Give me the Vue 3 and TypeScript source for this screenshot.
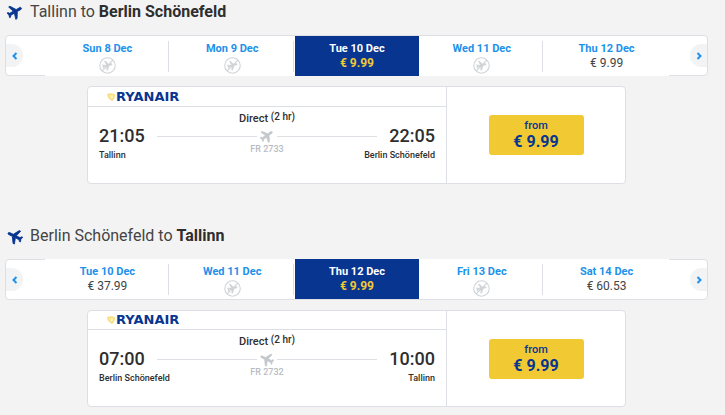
<script setup lang="ts">
interface Day { label: string; price?: string; selected?: boolean }
interface Trip {
  from: string
  to: string
  returning: boolean
  days: Day[]
  depart: string
  arrive: string
  flight: string
  price: string
}

const trips: Trip[] = [
  {
    from: 'Tallinn', to: 'Berlin Schönefeld', returning: false,
    days: [
      { label: 'Sun 8 Dec' },
      { label: 'Mon 9 Dec' },
      { label: 'Tue 10 Dec', price: '€ 9.99', selected: true },
      { label: 'Wed 11 Dec' },
      { label: 'Thu 12 Dec', price: '€ 9.99' },
    ],
    depart: '21:05', arrive: '22:05', flight: 'FR 2733', price: '€ 9.99',
  },
  {
    from: 'Berlin Schönefeld', to: 'Tallinn', returning: true,
    days: [
      { label: 'Tue 10 Dec', price: '€ 37.99' },
      { label: 'Wed 11 Dec' },
      { label: 'Thu 12 Dec', price: '€ 9.99', selected: true },
      { label: 'Fri 13 Dec' },
      { label: 'Sat 14 Dec', price: '€ 60.53' },
    ],
    depart: '07:00', arrive: '10:00', flight: 'FR 2732', price: '€ 9.99',
  },
]

const plane = 'M21 16v-2l-8-5V3.500c0-.83-.67-1.500-1.500-1.500S10 2.670 10 3.500V9l-8 5v2l8-2.500V19l-2 1.500V22l3.500-1 3.500 1v-1.500L13 19v-5.500l8 2.500z'
</script>

<template>
  <main class="page">
    <section v-for="trip in trips" :key="trip.flight" class="trip" :class="{ returning: trip.returning }">
      <h2 class="title">
        <svg class="title-icon" viewBox="0 0 24 24" aria-hidden="true">
          <path :d="plane" :transform="trip.returning ? 'rotate(-64 12 12)' : 'rotate(60 12 12)'" />
        </svg>
        <span>{{ trip.from }} to <b>{{ trip.to }}</b></span>
      </h2>

      <div class="carousel">
        <button class="arrow prev" type="button" aria-label="Previous days">
          <svg viewBox="0 0 8 8" aria-hidden="true"><path d="M5.500 1 2.500 4l3 3" /></svg>
        </button>
        <div class="days">
          <button v-for="day in trip.days" :key="day.label" type="button" class="day" :class="{ selected: day.selected }">
            <span class="date">{{ day.label }}</span>
            <span v-if="day.price" class="fare">{{ day.price }}</span>
            <svg v-else class="no-flight" viewBox="0 0 16 16" aria-hidden="true">
              <circle cx="8" cy="8" r="7.300" />
              <path class="glyph" :d="plane" transform="translate(8 8) rotate(75) scale(.46) translate(-12 -12)" />
              <path class="slash" d="M3 13 13 3" />
            </svg>
          </button>
        </div>
        <button class="arrow next" type="button" aria-label="Next days">
          <svg viewBox="0 0 8 8" aria-hidden="true"><path d="m2.500 1 3 3-3 3" /></svg>
        </button>
      </div>

      <article class="card">
        <div class="details">
          <header class="brand">
            <svg class="harp" viewBox="0 0 8 8" aria-hidden="true">
              <path class="harp-body" d="M0 1.500Q4-.8 8 1.500 8 5.500 5 8 1 6 0 1.500Z" />
              <path class="harp-strings" d="m2 2 2.500 4M4 1.500l1 4M6 1.500 5.500 5" />
            </svg>
            <span>RYANAIR</span>
          </header>
          <div class="flight">
            <p class="kind">Direct <small>(2 hr)</small></p>
            <div class="route">
              <time>{{ trip.depart }}</time>
              <div class="line">
                <svg viewBox="0 0 24 24" aria-hidden="true">
                  <path :d="plane" :transform="trip.returning ? 'rotate(-64 12 12)' : 'rotate(54 12 12)'" />
                </svg>
              </div>
              <time>{{ trip.arrive }}</time>
            </div>
            <div class="places">
              <span>{{ trip.from }}</span>
              <span class="number">{{ trip.flight }}</span>
              <span class="dest">{{ trip.to }}</span>
            </div>
          </div>
        </div>
        <div class="offer">
          <button class="buy" type="button">
            <span class="buy-from">from</span>
            <span class="buy-price">{{ trip.price }}</span>
          </button>
        </div>
      </article>
    </section>
  </main>
</template>

<style>
body { background: #f3f3f3; }
</style>

<style scoped>
* { box-sizing: border-box; }
.page {
  padding: 0 17px 0 5px;
  font-family: Roboto, "Liberation Sans", sans-serif;
  color: #2e2e2e;
}
button { font: inherit; border: 0; cursor: pointer; }
.trip { padding-bottom: 40px; }
.returning { padding-bottom: 0; }
.title {
  display: flex;
  align-items: center;
  gap: 6px;
  height: 35px;
  margin: 0;
  padding: 0 0 12px 1px;
  font-size: 16px;
  line-height: 22px;
  font-weight: 400;
  color: #444;
}
.title b { font-weight: 700; color: #2e2e2e; }
.title-icon {
  width: 18px;
  height: 18px;
  fill: #073590;
  stroke: #073590;
  stroke-width: 1;
  stroke-linejoin: round;
}

.carousel {
  display: flex;
  align-items: center;
  justify-content: space-between;
  height: 41px;
  border: 1px solid #dcdfe3;
  border-radius: 4px;
  background: #fff;
}
.arrow {
  display: flex;
  align-items: center;
  justify-content: center;
  width: 17px;
  height: 23px;
  padding: 0;
  background: #f1f3f5;
}
.prev { border-radius: 0 12px 12px 0; }
.next { border-radius: 12px 0 0 12px; }
.arrow svg { width: 8px; height: 8px; fill: none; stroke: #2091eb; stroke-width: 2; }
.days {
  display: flex;
  flex: 1;
  height: 40px;
  margin: 0 21px -1px 22px;
  background: #fff;
}
.returning .days { margin-top: -1px; margin-bottom: 0; }
.day {
  position: relative;
  display: flex;
  flex: 1;
  flex-direction: column;
  align-items: center;
  justify-content: flex-start;
  padding: 6px 0 0;
  background: none;
  line-height: 14px;
}
.day:not(:last-child)::after {
  content: "";
  position: absolute;
  top: 5px;
  right: 1px;
  bottom: 4px;
  width: 1px;
  background: #dcdfe3;
}
.day.selected { background: #073590; color: #fff; }
.day.selected::after { display: none; }
.date { font-size: 11px; font-weight: 700; color: #2091eb; }
.selected .date { color: #fff; }
.fare { font-size: 12px; color: #444; }
.selected .fare { font-weight: 700; color: #f1c933; }
.no-flight { width: 17px; height: 17px; margin-top: 1px; fill: none; stroke: #d0d3d6; stroke-width: 1; }
.no-flight .glyph { fill: #d0d3d6; stroke: #d0d3d6; }

.card {
  display: flex;
  margin: 10px 82px 0;
  border: 1px solid #dcdfe3;
  border-radius: 4px;
  background: #fff;
}
.details { flex: 1; }
.offer {
  display: flex;
  flex: 0 0 179px;
  justify-content: center;
  padding-top: 28px;
  border-left: 1px solid #dcdfe3;
}
.brand {
  display: flex;
  align-items: center;
  gap: 1px;
  height: 20px;
  padding-left: 19px;
  border-bottom: 1px solid #dcdfe3;
  font: 700 13px/18px "DejaVu Sans", sans-serif;
  color: #073590;
}
.returning .brand { height: 19px; }
.harp { width: 8px; height: 8px; }
.harp-body { fill: #f5dc78; }
.harp-strings { fill: none; stroke: #fff3bd; stroke-width: 1; }
.flight { height: 76px; padding: 5px 11px 0; }
.kind {
  margin: 0;
  text-align: center;
  font-size: 11px;
  line-height: 14px;
  font-weight: 500;
}
.kind small { font-size: 10px; line-height: 10px; vertical-align: 2px; }
.route { display: flex; align-items: center; gap: 12px; height: 20px; }
time { font-size: 18px; line-height: 20px; font-weight: 500; }
.line { display: flex; flex: 1; align-items: center; gap: 2px; }
.line::before, .line::after { content: ""; flex: 1; height: 1px; background: #dcdfe3; }
.line svg {
  width: 16px;
  height: 16px;
  fill: #c4c8cc;
  stroke: #c4c8cc;
  stroke-width: 1;
}
.places {
  display: grid;
  grid-template-columns: 1fr auto 1fr;
  padding-top: 3px;
  font-size: 9px;
  line-height: 12px;
  font-weight: 500;
}
.number { margin-top: -6px; color: #b8bcc1; }
.dest { text-align: right; }
.buy {
  display: flex;
  flex-direction: column;
  align-items: center;
  justify-content: flex-start;
  width: 95px;
  height: 40px;
  padding: 5px 0 0;
  border-radius: 3px;
  background: #f1c933;
  color: #073590;
}
.buy-from { font-size: 11px; line-height: 12px; font-weight: 500; }
.buy-price { font-size: 16px; line-height: 20px; font-weight: 700; }
</style>
